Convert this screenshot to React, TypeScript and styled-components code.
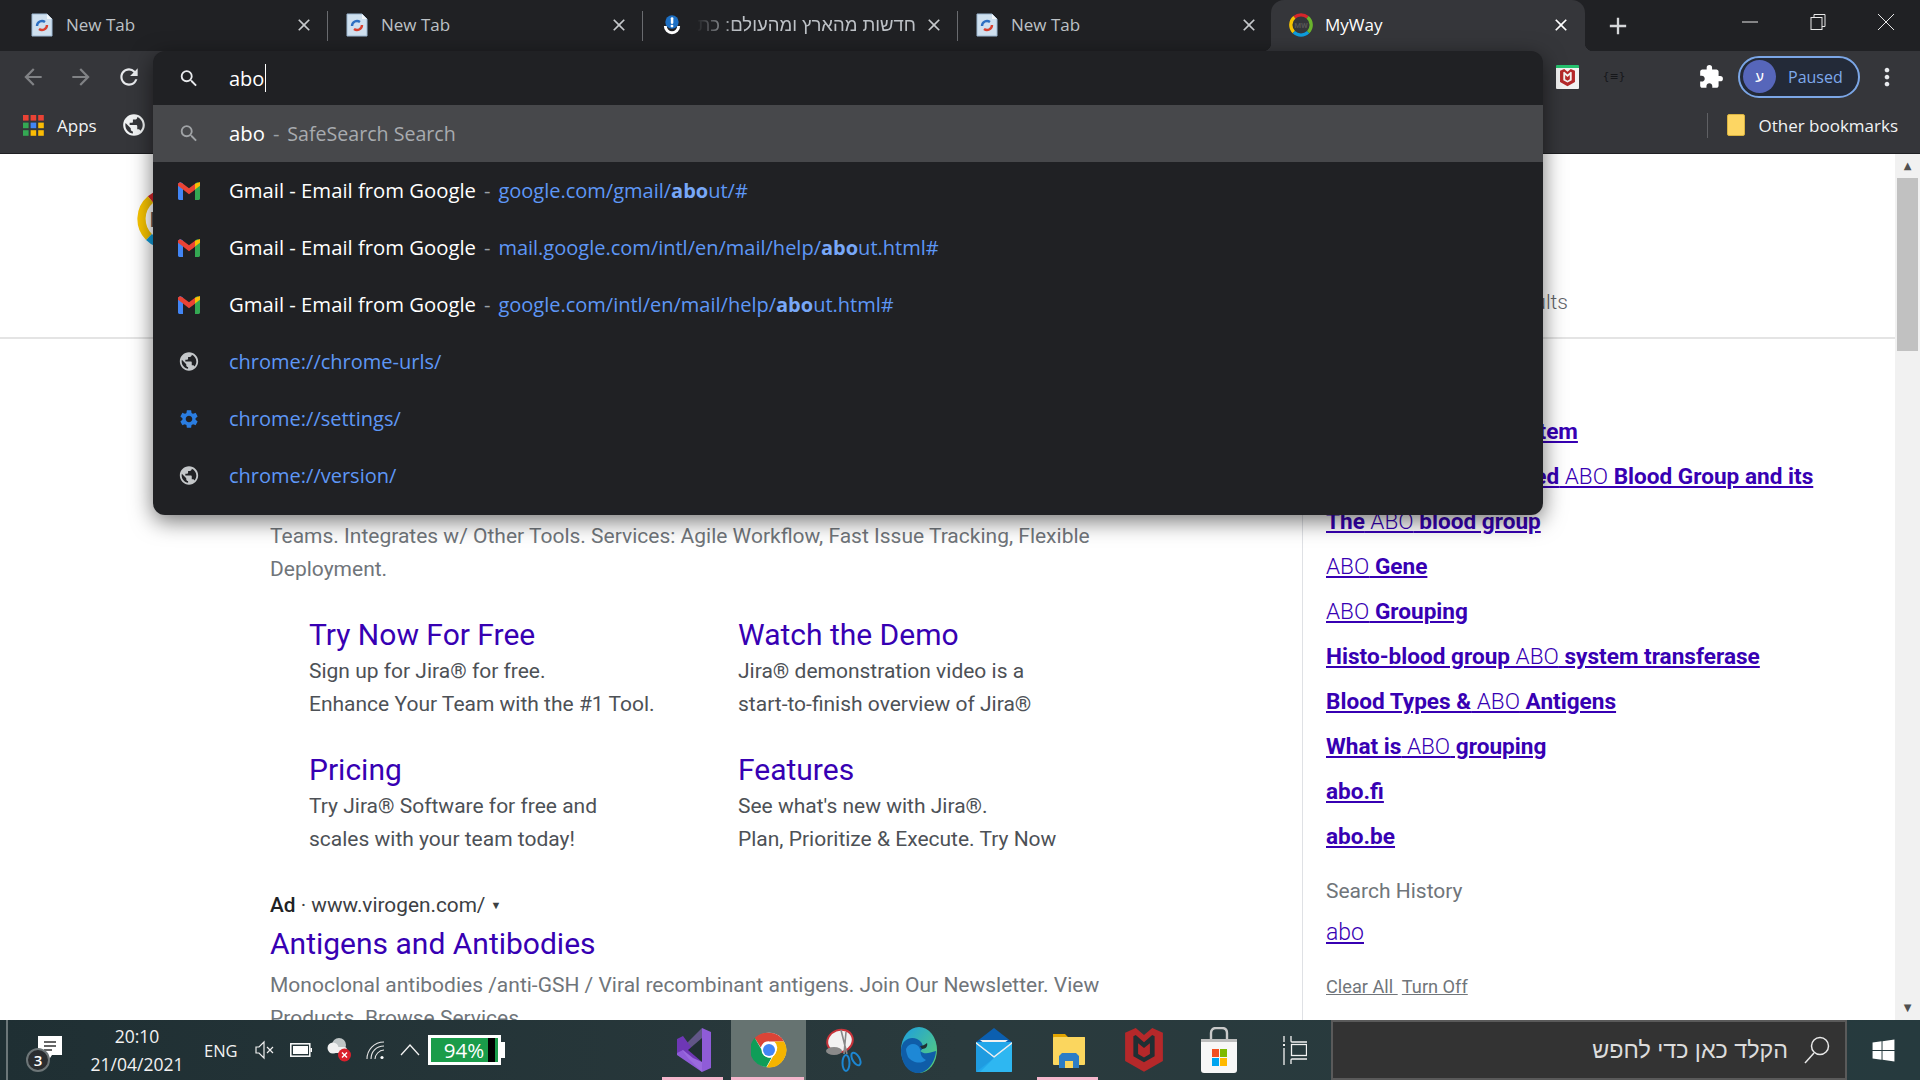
import React from 'react';
import styled, { createGlobalStyle } from 'styled-components';
import {
  MdAdd,
  MdArrowBack,
  MdArrowForward,
  MdClose,
  MdExtension,
  MdMoreVert,
  MdPublic,
  MdRefresh,
  MdSearch,
  MdSettings,
} from 'react-icons/md';
import { FaWindows } from 'react-icons/fa';

const UI_FONT = `"Open Sans", "Noto Sans", "Liberation Sans", sans-serif`;
const HEB_FONT = `"Liberation Sans", "DejaVu Sans", sans-serif`;
const PAGE_FONT = `Roboto, "Liberation Sans", sans-serif`;

const GlobalStyle = createGlobalStyle`
  html, body {
    margin: 0;
    padding: 0;
    overflow: hidden;
    background: #fff;
  }
  * { box-sizing: border-box; }
`;

/* ---------- small drawings ---------- */

function NewTabIcon() {
  return (
    <svg width="24" height="24" viewBox="0 0 24 24">
      <path d="M2 1h15l5 5v17H2z" fill="#cfe0ef" stroke="#9db9d3" />
      <path d="M17 1v5h5z" fill="#f2f6fa" />
      <path d="M7 13a5 5 0 0 1 8-4" fill="none" stroke="#2d6fc2" strokeWidth="2.4" />
      <path d="M17 12a5 5 0 0 1-8 4" fill="none" stroke="#d8402f" strokeWidth="2.4" />
    </svg>
  );
}

function NewsIcon() {
  return (
    <svg width="18" height="20" viewBox="0 0 24 27">
      <path d="M1 15a11 11 0 0 0 22 0h-4a7 7 0 0 1-14 0z" fill="#fff" />
      <circle cx="12" cy="9.500" r="9" fill="#1c6fc4" />
      <rect x="10.400" y="3" width="3.400" height="9" rx="1.500" fill="#fff" />
      <circle cx="12" cy="15" r="1.900" fill="#fff" />
    </svg>
  );
}

function RingLogo({ size }: { size: number }) {
  return (
    <svg width={size} height={size} viewBox="0 0 40 40">
      <path d="M9 7a17 17 0 0 1 22 0" fill="none" stroke="#d6262b" strokeWidth="5.5" />
      <path d="M9 7a17 17 0 0 0-1 25" fill="none" stroke="#f8c400" strokeWidth="5.5" />
      <path d="M8 32a17 17 0 0 0 24 0" fill="none" stroke="#0e9ddc" strokeWidth="5.5" />
      <path d="M32 32a17 17 0 0 0-1-25" fill="none" stroke="#6ab42d" strokeWidth="5.5" />
      <text x="20" y="25" textAnchor="middle" fontSize="13" fontWeight="700" fontFamily="Roboto, sans-serif" fill="#555">
        MW
      </text>
    </svg>
  );
}

function GmailIcon() {
  return (
    <svg width="22" height="18" viewBox="0 0 22 18">
      <path d="M0 3.200C0 .8 2.400-.4 4 .9L5 1.700V18H1.400C.6 18 0 17.400 0 16.600z" fill="#4285f4" />
      <path d="M22 3.200C22 .8 19.600-.4 18 .9l-1 .8V18h3.600c.8 0 1.400-.6 1.400-1.400z" fill="#34a853" />
      <path d="M17 1.700 22 0v3.800l-5 3.700z" fill="#fbbc04" />
      <path d="M5 7.500 0 3.800V1.500L2 .2 5 1.700l6 4.500 6-4.500v6l-6 4.500z" fill="#ea4335" />
    </svg>
  );
}

function AppsIcon() {
  const colors = ['#ea4335', '#ea4335', '#ea4335', '#34a853', '#4285f4', '#fbbc04', '#34a853', '#fbbc04', '#fbbc04'];
  return (
    <svg width="21" height="21" viewBox="0 0 21 21">
      {colors.map((c, i) => (
        <rect key={i} x={(i % 3) * 7.6} y={Math.floor(i / 3) * 7.6} width="5.600" height="5.600" fill={c} />
      ))}
    </svg>
  );
}

function McAfeeShield({ size }: { size: number }) {
  return (
    <svg width={size} height={size * 1.15} viewBox="0 0 32 37">
      <path d="M0 4 9 0l7 6 7-6 9 4v24L16 37 0 28z" fill="#b5282a" />
      <path d="M7 7v17l9 5 9-5V7l-2-1-7 6-7-6z" fill={size > 20 ? '#202f33' : '#f2f2f2'} />
      <path d="M11 13l5 4 5-4v9l-5 3-5-3z" fill="#b5282a" />
    </svg>
  );
}

function ChromeIcon() {
  return (
    <svg width="36" height="36" viewBox="0 0 48 48">
      <circle cx="24" cy="24" r="23" fill="#fff" />
      <path d="M24 1a23 23 0 0 1 20 11.500H24a11.500 11.500 0 0 0-11 8L5 8A23 23 0 0 1 24 1z" fill="#db4437" />
      <path d="M5 8l10.500 18a10 10 0 0 0 12 8L20.500 46.700A23 23 0 0 1 5 8z" fill="#0f9d58" />
      <path d="M44 12.500A23 23 0 0 1 21 47l10-17.500a11 11 0 0 0 0-17z" fill="#f4b400" />
      <circle cx="24" cy="24" r="10" fill="#fff" />
      <circle cx="24" cy="24" r="8" fill="#4285f4" />
    </svg>
  );
}

function VisualStudioIcon() {
  return (
    <svg width="36" height="46" viewBox="0 0 36 46">
      <path d="M26 1l9 4v36l-9 4L1 28v-6l6-3 19 15z" fill="#8f5cd8" />
      <path d="M26 1v44L12 31l-6-8 6-8z" fill="#a97ce6" opacity="0.45" />
      <path d="M1 12l6-3 19 26-9-4-10-8-6 3z" fill="#6e37b5" />
      <path d="M26 11v24l-14-12z" fill="#202f33" />
    </svg>
  );
}

function SnipIcon() {
  return (
    <svg width="36" height="46" viewBox="0 0 36 46">
      <ellipse cx="14" cy="14" rx="13" ry="11" fill="#f2f2f2" stroke="#c8333a" strokeWidth="2" transform="rotate(-20 14 14)" />
      <ellipse cx="8" cy="24" rx="8" ry="4" fill="#8a8a8a" />
      <path d="M15 3l6 24M20 5l-2 22" stroke="#888" strokeWidth="1.600" fill="none" />
      <ellipse cx="20" cy="36" rx="3.500" ry="8" fill="none" stroke="#1c86d1" strokeWidth="2" />
      <ellipse cx="30" cy="32" rx="3.500" ry="7" fill="none" stroke="#1c86d1" strokeWidth="2" transform="rotate(-30 30 32)" />
    </svg>
  );
}

function EdgeIcon() {
  return (
    <svg width="36" height="46" viewBox="0 0 36 46">
      <defs>
        <linearGradient id="edge-top" x1="0" y1="0" x2="1" y2="1">
          <stop offset="0" stopColor="#1b9de2" />
          <stop offset="1" stopColor="#5fd36f" />
        </linearGradient>
      </defs>
      <ellipse cx="18" cy="23" rx="18" ry="23" fill="url(#edge-top)" />
      <path d="M0 23C1 10 14 8 20 15c3 4 2 8-1 9 5 4 9 2 16 0-1 12-9 22-18 22C7 46 0 36 0 23z" fill="#0f5da8" />
      <path d="M5 22c3-7 12-6 14 0 1 4 0 8 6 11-6 5-14 2-18-3-1-3-2-5-2-8z" fill="#1e88d6" />
      <path d="M21 22c4 0 6-3 5-6-2 2-5 3-7 3z" fill="#202f33" />
    </svg>
  );
}

function MailIcon() {
  return (
    <svg width="36" height="44" viewBox="0 0 36 44">
      <path d="M18 0 36 14v6H0v-6z" fill="#0b5fb0" />
      <path d="M4 12h28l-14 11z" fill="#f0f0f0" />
      <rect x="0" y="14" width="36" height="30" rx="1" fill="#22a7ea" />
      <path d="M0 14l18 14 18-14v2L18 30 0 16z" fill="#e9edf0" />
      <path d="M0 44V16l18 14z" fill="#1f9be0" />
      <path d="M36 44H4l14-14 18-14z" fill="#37c2f5" opacity="0.6" />
    </svg>
  );
}

function ExplorerIcon() {
  return (
    <svg width="34" height="36" viewBox="0 0 34 36">
      <path d="M1 2h12l3 3h17v10H1z" fill="#e2a400" />
      <rect x="1" y="5" width="32" height="28" rx="1" fill="#fbd65e" />
      <path d="M7 36V24l3-3h14l3 3v12h-6v-7h-8v7z" fill="#2d7dc6" />
      <rect x="13" y="29" width="8" height="7" fill="#fbd65e" />
    </svg>
  );
}

function StoreIcon() {
  return (
    <svg width="36" height="46" viewBox="0 0 36 46">
      <path d="M10 12V6c0-3 2-5 5-5h6c3 0 5 2 5 5v6" fill="none" stroke="#c9c9c9" strokeWidth="2.400" />
      <path d="M0 12h36v31a3 3 0 0 1-3 3H3a3 3 0 0 1-3-3z" fill="#f7f7f7" />
      <rect y="12" width="36" height="3" fill="#bdbdbd" />
      <rect x="11" y="22" width="7" height="8" fill="#f25022" />
      <rect x="19" y="22" width="7" height="8" fill="#7fba00" />
      <rect x="11" y="31" width="7" height="8" fill="#00a4ef" />
      <rect x="19" y="31" width="7" height="8" fill="#ffb900" />
    </svg>
  );
}

function TaskViewIcon() {
  return (
    <svg width="24" height="30" viewBox="0 0 24 30" fill="none" stroke="#f2f2f2" strokeWidth="1.300">
      <path d="M8 1v5a1 1 0 0 0 1 1h15M8 29v-4a1 1 0 0 1 1-1h15" />
      <rect x="8.500" y="9.500" width="15" height="11" />
      <path d="M1 1v6M1 13v17" />
      <rect x="0" y="9" width="2" height="2" fill="#f2f2f2" stroke="none" />
    </svg>
  );
}

/* ---------- data ---------- */

type Suggestion = {
  kind: 'search' | 'gmail' | 'globe' | 'gear';
  title?: string;
  before?: string;
  match?: string;
  after?: string;
};

const suggestions: Suggestion[] = [
  { kind: 'gmail', title: 'Gmail - Email from Google', before: 'google.com/gmail/', match: 'abo', after: 'ut/#' },
  { kind: 'gmail', title: 'Gmail - Email from Google', before: 'mail.google.com/intl/en/mail/help/', match: 'abo', after: 'ut.html#' },
  { kind: 'gmail', title: 'Gmail - Email from Google', before: 'google.com/intl/en/mail/help/', match: 'abo', after: 'ut.html#' },
  { kind: 'globe', before: 'chrome://chrome-urls/' },
  { kind: 'gear', before: 'chrome://settings/' },
  { kind: 'globe', before: 'chrome://version/' },
];

const sideLinks: { thin?: string; rest?: string; lead?: string }[] = [
  { lead: 'ABO blood group system' },
  { lead: 'Genetically Engineered', thin: ' ABO', rest: ' Blood Group and its' },
  { lead: 'The', thin: ' ABO', rest: ' blood group' },
  { thin: 'ABO', rest: ' Gene' },
  { thin: 'ABO', rest: ' Grouping' },
  { lead: 'Histo-blood group', thin: ' ABO', rest: ' system transferase' },
  { lead: 'Blood Types &', thin: ' ABO', rest: ' Antigens' },
  { lead: 'What is', thin: ' ABO', rest: ' grouping' },
  { lead: 'abo.fi' },
  { lead: 'abo.be' },
];

const sitelinks = [
  { title: 'Try Now For Free', lines: ['Sign up for Jira® for free.', 'Enhance Your Team with the #1 Tool.'] },
  { title: 'Watch the Demo', lines: ['Jira® demonstration video is a', 'start-to-finish overview of Jira®'] },
  { title: 'Pricing', lines: ['Try Jira® Software for free and', 'scales with your team today!'] },
  { title: 'Features', lines: ["See what's new with Jira®.", 'Plan, Prioritize & Execute. Try Now'] },
];

const tabs = [
  { icon: <NewTabIcon />, title: 'New Tab' },
  { icon: <NewTabIcon />, title: 'New Tab' },
  { icon: <NewsIcon />, title: 'חדשות מהארץ ומהעולם: כת', rtl: true },
  { icon: <NewTabIcon />, title: 'New Tab' },
];

function SuggestionIcon({ kind }: { kind: Suggestion['kind'] }) {
  if (kind === 'gmail') return <GmailIcon />;
  if (kind === 'globe') return <MdPublic size={25} color="#c4c7c9" />;
  if (kind === 'gear') return <MdSettings size={26} color="#2a7de1" />;
  return <MdSearch size={25} color="#a0a3a6" />;
}

/* ---------- page ---------- */

export default function App() {
  return (
    <Screen>
      <GlobalStyle />
      <Browser>
        <TabStrip>
          {tabs.map((t, i) => (
            <Tab key={i}>
              <TabIcon>{t.icon}</TabIcon>
              <TabTitle $rtl={t.rtl}>{t.title}</TabTitle>
              <TabClose>
                <MdClose size={20} />
              </TabClose>
              <TabSeparator $hidden={i === 3} />
            </Tab>
          ))}
          <ActiveTab>
            <TabIcon>
              <RingLogo size={24} />
            </TabIcon>
            <ActiveTitle>MyWay</ActiveTitle>
            <ActiveClose>
              <MdClose size={20} />
            </ActiveClose>
          </ActiveTab>
          <NewTabButton>
            <MdAdd size={28} />
          </NewTabButton>
          <WindowControls>
            <WindowButton>
              <svg width="16" height="16" viewBox="0 0 16 16"><path d="M0 8h16" stroke="#e8e8e8" strokeWidth="1" /></svg>
            </WindowButton>
            <WindowButton>
              <svg width="16" height="16" viewBox="0 0 16 16" fill="none" stroke="#e8e8e8"><rect x="1" y="3.500" width="11" height="12" /><path d="M4 3V.5h11v12h-3" /></svg>
            </WindowButton>
            <WindowButton>
              <svg width="16" height="16" viewBox="0 0 16 16"><path d="M0 0l16 16M16 0 0 16" stroke="#e8e8e8" strokeWidth="1" /></svg>
            </WindowButton>
          </WindowControls>
        </TabStrip>

        <Toolbar>
          <NavButton $dim><MdArrowBack size={26} /></NavButton>
          <NavButton $dim><MdArrowForward size={26} /></NavButton>
          <NavButton><MdRefresh size={28} /></NavButton>
          <ToolbarRight>
            <ExtensionCard><McAfeeShield size={15} /></ExtensionCard>
            <JsonExt>{'{≡}'}</JsonExt>
            <PuzzleButton><MdExtension size={26} /></PuzzleButton>
            <ProfilePill>
              <Avatar>ע</Avatar>
              <PausedLabel>Paused</PausedLabel>
            </ProfilePill>
            <MenuButton><MdMoreVert size={28} /></MenuButton>
          </ToolbarRight>
        </Toolbar>

        <BookmarksBar>
          <AppsIcon />
          <BookmarkLabel>Apps</BookmarkLabel>
          <BookmarkGlobe><MdPublic size={26} /></BookmarkGlobe>
          <OtherBookmarks>
            <BarDivider />
            <FolderIcon />
            <BookmarkLabel>Other bookmarks</BookmarkLabel>
          </OtherBookmarks>
        </BookmarksBar>

        <Viewport>
          <PageScroll>
            <SiteHeader>
              <LogoSlot><RingLogo size={60} /></LogoSlot>
              <HeaderNav>All Results</HeaderNav>
            </SiteHeader>
            <Columns>
              <MainColumn>
                <AdLine><b>Ad</b> · www.atlassian.com/ <Caret>▼</Caret></AdLine>
                <AdTitle>Jira® Official Site</AdTitle>
                <AdBody>
                  Plan, Track, &amp; Release Great Software. Best Software
                  <br />
                  Teams. Integrates w/ Other Tools. Services: Agile Workflow, Fast Issue Tracking, Flexible Deployment.
                </AdBody>
                <Sitelinks>
                  {sitelinks.map((s) => (
                    <div key={s.title}>
                      <SitelinkTitle>{s.title}</SitelinkTitle>
                      {s.lines.map((l) => (
                        <SitelinkLine key={l}>{l}</SitelinkLine>
                      ))}
                    </div>
                  ))}
                </Sitelinks>
                <AdLine $second><b>Ad</b> · www.virogen.com/ <Caret>▼</Caret></AdLine>
                <AdTitle>Antigens and Antibodies</AdTitle>
                <AdBody>
                  Monoclonal antibodies /anti-GSH / Viral recombinant antigens. Join Our Newsletter. View Products. Browse
                  Services.
                </AdBody>
              </MainColumn>
              <SideColumn>
                {sideLinks.map((l, i) => (
                  <SideLink key={i}>
                    {l.lead}
                    {l.thin && <Thin>{l.thin}</Thin>}
                    {l.rest}
                  </SideLink>
                ))}
                <SideHeading>Search History</SideHeading>
                <HistoryLink>abo</HistoryLink>
                <HistoryActions>
                  <u>Clear All&nbsp;</u> <u>Turn Off</u>
                </HistoryActions>
              </SideColumn>
            </Columns>
          </PageScroll>
          <Scrollbar>
            <ScrollArrow>▲</ScrollArrow>
            <ScrollThumb />
            <ScrollArrow $bottom>▼</ScrollArrow>
          </Scrollbar>
        </Viewport>

        <Omnibox>
          <InputRow>
            <IconCell><MdSearch size={25} color="#e8eaed" /></IconCell>
            <InputText>abo</InputText>
            <TextCaret />
          </InputRow>
          <Row $selected>
            <IconCell><SuggestionIcon kind="search" /></IconCell>
            <RowTitle>abo</RowTitle>
            <RowDash>-</RowDash>
            <RowHint>SafeSearch Search</RowHint>
          </Row>
          {suggestions.map((s, i) => (
            <Row key={i}>
              <IconCell><SuggestionIcon kind={s.kind} /></IconCell>
              {s.title && <RowTitle>{s.title}</RowTitle>}
              {s.title && <RowDash>-</RowDash>}
              <RowUrl>
                {s.before}
                {s.match && <b>{s.match}</b>}
                {s.after}
              </RowUrl>
            </Row>
          ))}
        </Omnibox>
      </Browser>

      <Taskbar>
        <Tray>
          <TrayLine />
          <NotifyBox>
            <svg width="24" height="26" viewBox="0 0 24 26">
              <path d="M0 0h24v19h-10l-4 6v-6H0z" fill="#fff" />
              <path d="M6 6h12M6 10h12M6 14h8" stroke="#333" strokeWidth="1.300" />
            </svg>
            <NotifyBadge>3</NotifyBadge>
          </NotifyBox>
          <Clock>
            <span>20:10</span>
            <span>21/04/2021</span>
          </Clock>
          <LangLabel>ENG</LangLabel>
          <TrayIcons>
            <svg width="20" height="22" viewBox="0 0 20 22" fill="none" stroke="#eee" strokeWidth="1.200">
              <path d="M1 8v6h3l5 5V3L4 8zM12 8l6 6M18 8l-6 6" />
            </svg>
            <svg width="22" height="14" viewBox="0 0 22 14">
              <rect x=".8" y=".8" width="19" height="12.400" fill="none" stroke="#fff" strokeWidth="1.500" />
              <rect x="3" y="3" width="15" height="8" fill="#fff" />
              <rect x="20.500" y="5" width="1.500" height="4" fill="#fff" />
            </svg>
            <svg width="24" height="26" viewBox="0 0 24 26">
              <circle cx="12" cy="8" r="7" fill="#bfc5c6" />
              <circle cx="6" cy="11" r="5.500" fill="#f0f0f0" />
              <rect x="2" y="10" width="18" height="6" rx="3" fill="#f0f0f0" />
              <circle cx="17.500" cy="18" r="6.500" fill="#d9202c" />
              <path d="M15 15.500l5 5M20 15.500l-5 5" stroke="#fff" strokeWidth="1.400" />
            </svg>
            <svg width="19" height="19" viewBox="0 0 19 19" fill="none" stroke="#e6e6e6" strokeWidth="1.100">
              <path d="M1 18C1 9 8 1 18 1M5 18C5 11 10 5 18 5M9 18c0-4 4-9 9-9" />
              <circle cx="16" cy="16.500" r="1.600" fill="#fff" stroke="none" />
            </svg>
            <svg width="20" height="12" viewBox="0 0 20 12" fill="none" stroke="#f2f2f2" strokeWidth="1.300">
              <path d="M1 11 10 1l9 10" />
            </svg>
          </TrayIcons>
          <BigBattery>
            <BatteryFill>94%</BatteryFill>
            <BatteryEnd />
          </BigBattery>
        </Tray>

        <AppSlot $running><VisualStudioIcon /></AppSlot>
        <AppSlot $running $active><ChromeIcon /></AppSlot>
        <AppSlot><SnipIcon /></AppSlot>
        <AppSlot><EdgeIcon /></AppSlot>
        <AppSlot><MailIcon /></AppSlot>
        <AppSlot $running><ExplorerIcon /></AppSlot>
        <AppSlot><McAfeeShield size={38} /></AppSlot>
        <AppSlot><StoreIcon /></AppSlot>
        <TaskViewSlot><TaskViewIcon /></TaskViewSlot>

        <SearchBox>
          <SearchGlass>
            <svg width="26" height="28" viewBox="0 0 26 28" fill="none" stroke="#e8e8e8" strokeWidth="1.500">
              <circle cx="16" cy="10" r="8.500" />
              <path d="M10 17 1 27" />
            </svg>
          </SearchGlass>
          <SearchHint>הקלד כאן כדי לחפש</SearchHint>
        </SearchBox>
        <StartButton><FaWindows size={25} color="#fff" /></StartButton>
      </Taskbar>
    </Screen>
  );
}

/* ---------- layout ---------- */

const Screen = styled.div`
  width: 1920px;
  height: 1080px;
  display: flex;
  flex-direction: column;
  overflow: hidden;
`;

const Browser = styled.div`
  position: relative;
  flex: 1;
  min-height: 0;
  display: flex;
  flex-direction: column;
`;

const TabStrip = styled.div`
  height: 51px;
  flex: none;
  display: flex;
  padding-left: 16px;
  background: #202124;
  font-family: ${UI_FONT};
`;

const Tab = styled.div`
  position: relative;
  width: 315px;
  display: flex;
  align-items: center;
  padding-left: 14px;
  padding-bottom: 2px;
  color: #bdc1c6;
`;

const TabIcon = styled.div`
  width: 24px;
  height: 30px;
  flex: none;
  display: flex;
  align-items: center;
  justify-content: center;
`;

const TabTitle = styled.div<{ $rtl?: boolean }>`
  width: 220px;
  margin-left: 12px;
  white-space: nowrap;
  overflow: hidden;
  font-family: ${(p) => (p.$rtl ? HEB_FONT : UI_FONT)};
  font-size: ${(p) => (p.$rtl ? '18.5px' : '17px')};
  direction: ${(p) => (p.$rtl ? 'rtl' : 'ltr')};
  -webkit-mask-image: ${(p) => (p.$rtl ? 'linear-gradient(90deg, transparent, #000 40px)' : 'none')};
`;

const TabClose = styled.div`
  display: flex;
  margin-left: 8px;
  color: #c6c9cc;
`;

const TabSeparator = styled.div<{ $hidden?: boolean }>`
  position: absolute;
  right: 3px;
  top: 11px;
  width: 1px;
  height: 30px;
  background: ${(p) => (p.$hidden ? 'transparent' : '#6a6c70')};
`;

const ActiveTab = styled.div`
  position: relative;
  width: 314px;
  margin-left: -5px;
  display: flex;
  align-items: center;
  padding-left: 18px;
  padding-bottom: 2px;
  background: #35363a;
  border-radius: 13px 13px 0 0;

  &::before,
  &::after {
    content: '';
    position: absolute;
    bottom: 0;
    width: 8px;
    height: 8px;
  }
  &::before {
    left: -8px;
    background: radial-gradient(circle at 0 0, transparent 8px, #35363a 8.500px);
  }
  &::after {
    right: -8px;
    background: radial-gradient(circle at 100% 0, transparent 8px, #35363a 8.500px);
  }
`;

const ActiveTitle = styled.div`
  width: 226px;
  margin-left: 12px;
  font-size: 17px;
  color: #fff;
`;

const ActiveClose = styled.div`
  display: flex;
  color: #fff;
`;

const NewTabButton = styled.div`
  margin-left: 19px;
  display: flex;
  align-items: center;
  color: #d5d7d9;
`;

const WindowControls = styled.div`
  margin-left: auto;
  display: flex;
  align-items: flex-start;
`;

const WindowButton = styled.div`
  width: 68px;
  height: 44px;
  display: flex;
  align-items: center;
  justify-content: center;
`;

const Toolbar = styled.div`
  height: 51px;
  flex: none;
  display: flex;
  align-items: center;
  padding-left: 20px;
  background: #35363a;
  gap: 22px;
`;

const NavButton = styled.div<{ $dim?: boolean }>`
  width: 26px;
  display: flex;
  justify-content: center;
  color: ${(p) => (p.$dim ? '#808285' : '#e8eaed')};
`;

const ToolbarRight = styled.div`
  margin-left: auto;
  display: flex;
  align-items: center;
`;

const ExtensionCard = styled.div`
  width: 23px;
  height: 24px;
  display: flex;
  align-items: center;
  justify-content: center;
  background: #f2f2f2;
  border-top: 3px solid #25c26e;
  border-radius: 1px;
`;

const JsonExt = styled.div`
  width: 24px;
  margin-left: 23px;
  font-family: "DejaVu Sans", sans-serif;
  font-size: 11px;
  color: #16171a;
  text-align: center;
  white-space: nowrap;
`;

const PuzzleButton = styled.div`
  margin-left: 72px;
  display: flex;
  color: #fff;
`;

const ProfilePill = styled.div`
  width: 122px;
  height: 42px;
  margin-left: 14px;
  display: flex;
  align-items: center;
  padding-left: 3px;
  background: #232a38;
  border: 2px solid #7ba6e6;
  border-radius: 21px;
`;

const Avatar = styled.div`
  width: 33px;
  height: 33px;
  border-radius: 50%;
  display: flex;
  align-items: center;
  justify-content: center;
  background: #5666ba;
  color: #fff;
  font-family: ${HEB_FONT};
  font-size: 15px;
`;

const PausedLabel = styled.div`
  margin-left: 12px;
  font-family: ${UI_FONT};
  font-size: 16px;
  color: #7ea9ec;
`;

const MenuButton = styled.div`
  width: 28px;
  margin-left: 13px;
  margin-right: 19px;
  display: flex;
  color: #e8eaed;
`;

const BookmarksBar = styled.div`
  height: 52px;
  flex: none;
  display: flex;
  align-items: center;
  padding-left: 23px;
  padding-bottom: 5px;
  background: #35363a;
  border-bottom: 1px solid #1f2023;
`;

const BookmarkLabel = styled.div`
  margin-left: 13px;
  font-family: ${UI_FONT};
  font-size: 17px;
  color: #f1f3f4;
`;

const BookmarkGlobe = styled.div`
  margin-left: 24px;
  display: flex;
  color: #f1f3f4;
`;

const OtherBookmarks = styled.div`
  margin-left: auto;
  margin-right: 22px;
  display: flex;
  align-items: center;
`;

const BarDivider = styled.div`
  width: 1px;
  height: 25px;
  margin-right: 19px;
  background: #5f6064;
`;

const FolderIcon = styled.div`
  width: 18px;
  height: 22px;
  background: #fdd663;
  border: 1px solid #d9b341;
  border-radius: 2px;
`;

const Viewport = styled.div`
  flex: 1;
  min-height: 0;
  display: flex;
  background: #fff;
`;

const PageScroll = styled.div`
  flex: 1;
  min-width: 0;
  overflow: hidden;
  font-family: ${PAGE_FONT};
`;

const SiteHeader = styled.div`
  height: 185px;
  display: flex;
  padding-left: 137px;
  border-bottom: 2px solid #e4e4e4;
`;

const LogoSlot = styled.div`
  padding-top: 35px;
`;

const HeaderNav = styled.div`
  margin-left: auto;
  margin-right: 327px;
  padding-top: 136px;
  font-size: 21px;
  font-weight: 300;
  color: #5f6368;
`;

const Columns = styled.div`
  display: flex;
`;

const MainColumn = styled.div`
  width: 1302px;
  padding: 69px 0 0 270px;
`;

const AdLine = styled.div<{ $second?: boolean }>`
  margin-top: ${(p) => (p.$second ? '34px' : '0')};
  font-size: 20.8px;
  line-height: 30px;
  color: #3c4043;

  b {
    font-weight: 500;
    color: #202124;
  }
`;

const Caret = styled.span`
  font-size: 11px;
  vertical-align: 3px;
`;

const AdTitle = styled.div`
  margin-top: 1px;
  font-size: 30px;
  line-height: 44px;
  color: #3700b3;
`;

const AdBody = styled.div`
  width: 860px;
  font-size: 21px;
  line-height: 33px;
  margin-top: 3px;
  color: #70757a;
`;

const Sitelinks = styled.div`
  display: grid;
  grid-template-columns: 429px 1fr;
  row-gap: 28.5px;
  margin-top: 29px;
  padding-left: 39px;
`;

const SitelinkTitle = styled.div`
  font-size: 30px;
  line-height: 40px;
  color: #3700b3;
`;

const SitelinkLine = styled.div`
  font-size: 21px;
  line-height: 33px;
  color: #4d5156;
`;

const SideColumn = styled.div`
  flex: 1;
  padding: 70px 0 0 23px;
  border-left: 1px solid #dfe1e5;
`;

const SideLink = styled.div`
  font-size: 22.6px;
  line-height: 45px;
  font-weight: 700;
  color: #3700b3;
  text-decoration: underline;
  white-space: nowrap;
`;

const Thin = styled.span`
  font-weight: 300;
`;

const SideHeading = styled.div`
  margin-top: 12px;
  font-size: 21px;
  line-height: 40px;
  color: #70757a;
`;

const HistoryLink = styled.div`
  margin-top: 4px;
  font-size: 23px;
  line-height: 36px;
  font-weight: 300;
  color: #3700b3;
  text-decoration: underline;
`;

const HistoryActions = styled.div`
  margin-top: 22px;
  font-size: 18.2px;
  line-height: 28px;
  color: #70757a;
  white-space: nowrap;
`;

const Scrollbar = styled.div`
  width: 25px;
  flex: none;
  padding: 0 2px;
  display: flex;
  flex-direction: column;
  background: #f1f1f1;
`;

const ScrollArrow = styled.div<{ $bottom?: boolean }>`
  height: 24px;
  margin-top: ${(p) => (p.$bottom ? 'auto' : '0')};
  font-family: "DejaVu Sans", sans-serif;
  font-size: 10px;
  line-height: 24px;
  text-align: center;
  color: #505050;
`;

const ScrollThumb = styled.div`
  height: 173px;
  background: #c1c1c1;
`;

const Omnibox = styled.div`
  position: absolute;
  left: 153px;
  top: 51px;
  width: 1390px;
  height: 464px;
  background: #202124;
  border-radius: 12px;
  box-shadow: 0 6px 22px rgba(0, 0, 0, 0.55);
  font-family: ${UI_FONT};
  color: #fff;
`;

const InputRow = styled.div`
  height: 54px;
  display: flex;
  align-items: center;
  padding-left: 25px;
`;

const IconCell = styled.div`
  width: 22px;
  margin-right: 29px;
  display: flex;
  align-items: center;
  justify-content: center;
  flex: none;
`;

const InputText = styled.div`
  font-size: 20px;
  color: #fff;
`;

const TextCaret = styled.div`
  width: 1px;
  height: 28px;
  margin-left: 1px;
  background: #fff;
`;

const Row = styled.div<{ $selected?: boolean }>`
  height: 57px;
  display: flex;
  align-items: center;
  padding-left: 25px;
  background: ${(p) => (p.$selected ? '#47484b' : 'transparent')};
  white-space: nowrap;
  font-size: 20px;
`;

const RowTitle = styled.span`
  margin-top: -2px;
  font-size: 20.3px;
  color: #fff;
`;

const RowDash = styled.span`
  margin: 0 8px;
  color: #9aa0a6;
`;

const RowHint = styled.span`
  font-size: 19.6px;
  color: #a8abaf;
`;

const RowUrl = styled.span`
  color: #5e97f6;

  b {
    font-weight: 700;
    color: #78a8f8;
  }
`;

const Taskbar = styled.div`
  height: 60px;
  flex: none;
  display: flex;
  background: linear-gradient(90deg, #1f2f33 0%, #2a3a3d 50%, #263a3e 100%);
  font-family: ${UI_FONT};
  color: #f2f2f2;
`;

const Tray = styled.div`
  width: 656px;
  flex: none;
  display: flex;
  align-items: center;
`;

const TrayLine = styled.div`
  width: 2px;
  height: 60px;
  margin-left: 6px;
  background: #6b7678;
`;

const NotifyBox = styled.div`
  position: relative;
  width: 36px;
  height: 44px;
  margin-left: 18px;
  display: flex;
  justify-content: flex-end;
  padding-top: 8px;
`;

const NotifyBadge = styled.div`
  position: absolute;
  left: 0;
  bottom: 0;
  width: 24px;
  height: 24px;
  border: 2px solid #6d7678;
  border-radius: 50%;
  background: #2a2d30;
  font-size: 15px;
  font-weight: 600;
  line-height: 20px;
  text-align: center;
  color: #fff;
`;

const Clock = styled.div`
  width: 96px;
  margin-left: 27px;
  display: flex;
  flex-direction: column;
  align-items: center;
  gap: 6px;
  font-size: 17.5px;
  line-height: 22px;
  white-space: nowrap;
`;

const LangLabel = styled.div`
  margin-left: 19px;
  width: 34px;
  font-size: 16.500px;
  white-space: nowrap;
`;

const TrayIcons = styled.div`
  margin-left: 17px;
  display: flex;
  align-items: center;
  gap: 15px;
`;

const BigBattery = styled.div`
  position: relative;
  width: 73px;
  height: 30px;
  margin-left: 8px;
  border: 3px solid #fff;
  display: flex;
  background: #1a9c4a;

  &::after {
    content: '';
    position: absolute;
    right: -7px;
    top: 4px;
    width: 4px;
    height: 16px;
    background: #fff;
  }
`;

const BatteryFill = styled.div`
  flex: 1;
  padding-left: 9px;
  font-size: 20.5px;
  line-height: 24px;
  text-align: center;
  color: #fff;
  white-space: nowrap;
`;

const BatteryEnd = styled.div`
  width: 7px;
  flex: none;
  margin-right: 3px;
  background: #000;
`;

const AppSlot = styled.div<{ $running?: boolean; $active?: boolean }>`
  position: relative;
  width: 75px;
  flex: none;
  display: flex;
  align-items: center;
  justify-content: center;
  background: ${(p) => (p.$active ? '#667371' : 'transparent')};

  &::after {
    content: '';
    position: absolute;
    left: ${(p) => (p.$active ? '0' : '6px')};
    right: ${(p) => (p.$active ? '2px' : '8px')};
    bottom: 0;
    height: 3px;
    background: ${(p) => (p.$running ? '#f4b6cc' : 'transparent')};
  }
`;

const TaskViewSlot = styled(AppSlot)`
  padding-left: 3px;
`;

const SearchBox = styled.div`
  width: 516px;
  flex: none;
  display: flex;
  flex-direction: row-reverse;
  align-items: center;
  padding-right: 15px;
  background: #333;
  border: 2px solid #5a5a5a;
`;

const SearchGlass = styled.div`
  display: flex;
`;

const SearchHint = styled.div`
  margin-right: 16px;
  direction: rtl;
  font-family: ${HEB_FONT};
  font-size: 23.3px;
  color: #dcdcdc;
`;

const StartButton = styled.div`
  flex: 1;
  display: flex;
  align-items: center;
  justify-content: center;
`;
